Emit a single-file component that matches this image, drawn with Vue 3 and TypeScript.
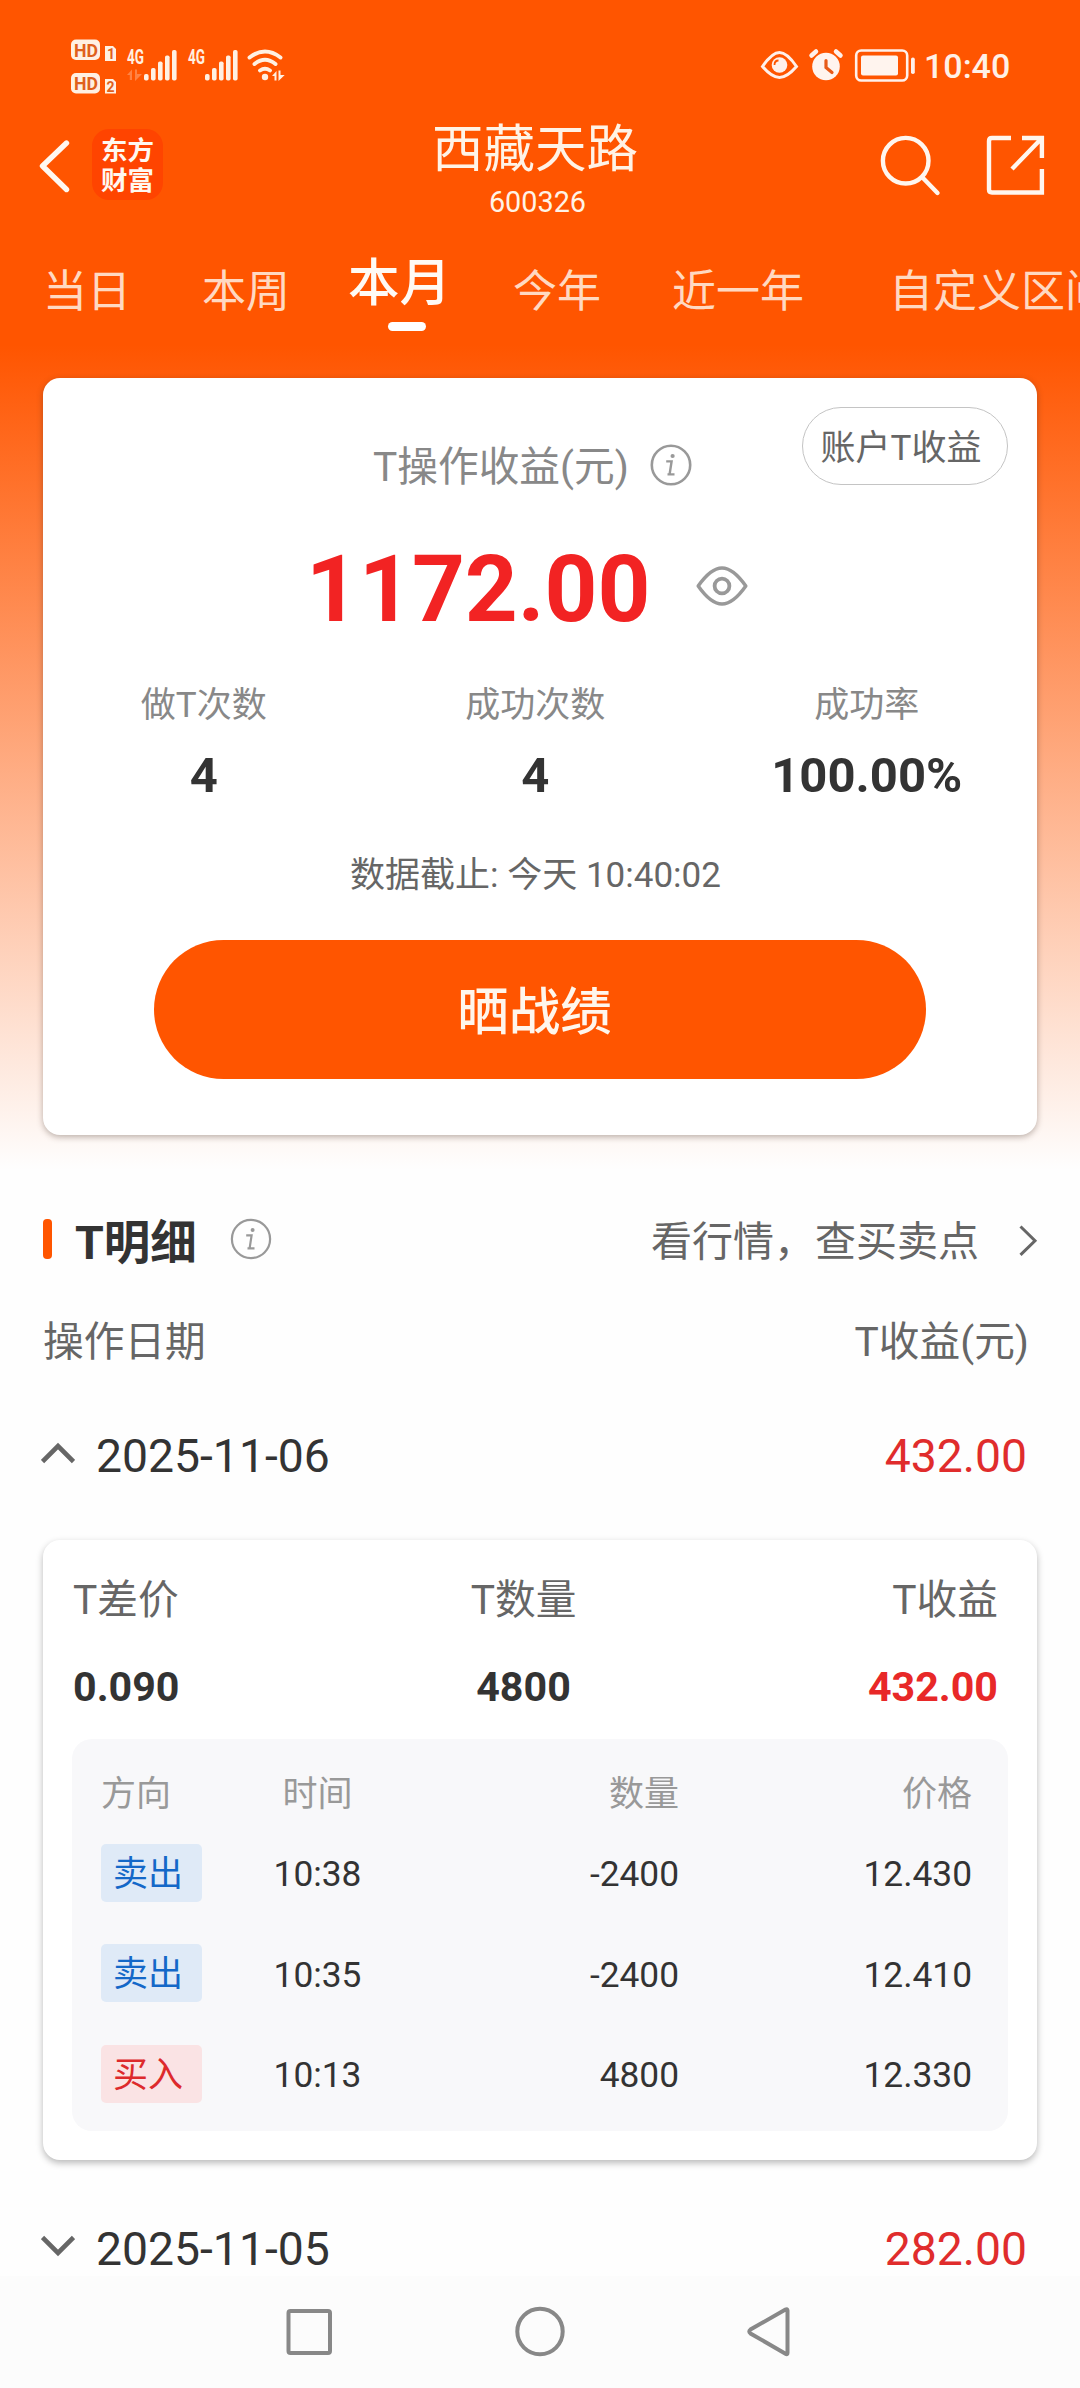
<script setup lang="ts">
interface Trade {
  side: 'sell' | 'buy'
  label: string
  time: string
  amount: string
  price: string
}

const tabs: { label: string; cls: string }[] = [
  { label: '当日', cls: 't1' },
  { label: '本周', cls: 't2' },
  { label: '本月', cls: 't3 active' },
  { label: '今年', cls: 't4' },
  { label: '近一年', cls: 't5' },
  { label: '自定义区间', cls: 't6' },
]

const stats = [
  { label: '做T次数', value: '4' },
  { label: '成功次数', value: '4' },
  { label: '成功率', value: '100.00%' },
]

const trades: Trade[] = [
  { side: 'sell', label: '卖出', time: '10:38', amount: '-2400', price: '12.430' },
  { side: 'sell', label: '卖出', time: '10:35', amount: '-2400', price: '12.410' },
  { side: 'buy', label: '买入', time: '10:13', amount: '4800', price: '12.330' },
]

const bars = [
  [144, 74],
  [151, 68],
  [158, 61.5],
  [165, 55.5],
  [172, 50],
]
</script>

<template>
  <div class="screen">
    <div class="hero">
      <div class="status">
        <svg width="300" height="104" viewBox="0 0 300 104">
          <g fill="#fff0e2">
            <rect x="71" y="39.5" width="29" height="20.5" rx="5" />
            <rect x="71" y="73" width="29" height="20.5" rx="5" />
            <path d="M105 46h8l3 3v12h-11z" />
            <path d="M105 79h8l3 3v11.5h-11z" />
            <g class="cond" font-size="19.500" font-weight="700">
              <text x="127" y="63.5" textLength="17" lengthAdjust="spacingAndGlyphs">4G</text>
              <text x="188" y="63.5" textLength="17" lengthAdjust="spacingAndGlyphs">4G</text>
            </g>
            <g v-for="b in bars" :key="b[0]">
              <rect :x="b[0]" :y="b[1]" width="4.6" :height="80.5 - b[1]" rx="1.8" />
              <rect :x="b[0] + 61" :y="b[1]" width="4.6" :height="80.5 - b[1]" rx="1.8" />
            </g>
            <circle cx="265" cy="77" r="3.2" />
            <path d="M272 76l4.500-5v9.500h-2V76zM278.500 70.500h2V75h4.200l-6.200 6z" />
            <path d="M127 75l5-5.500V80h-2.200v-5zM135 69.500h2V74h5l-7 7z" opacity="0.3" />
          </g>
          <g class="cond" fill="#e0601c" font-weight="700">
            <text x="74" y="56.500" font-size="18.500" textLength="24" lengthAdjust="spacingAndGlyphs">HD</text>
            <text x="74" y="90" font-size="18.500" textLength="24" lengthAdjust="spacingAndGlyphs">HD</text>
            <text x="107" y="58.500" font-size="14">1</text>
            <text x="106.500" y="91.500" font-size="14">2</text>
          </g>
          <g fill="none" stroke="#fff0e2" stroke-width="3.900" stroke-linecap="round">
            <path d="M249.500 57.500q15.500-12 31 0M254.500 64q10.500-8.500 21 0M260 70.500q5-3.500 10 0" />
          </g>
        </svg>
        <div class="status-right">
          <svg width="160" height="40" viewBox="758 45 160 40">
            <g fill="none" stroke="#fff0ea" stroke-width="3">
              <path d="M762.500 66.500C769 57 774 52.500 779.500 52.500S790 57 796.500 66.500C790 74 785 77.500 779.500 77.500S769 74 762.500 66.500z" />
              <rect x="856.200" y="50.500" width="51" height="30" rx="5" stroke-width="2.600" />
              <path d="M811.500 55.500l4.500-4M840.500 55.500l-4.500-4" stroke-width="4.500" stroke-linecap="round" />
            </g>
            <circle cx="779.500" cy="65" r="7.800" fill="#fff0ea" />
            <path d="M774.500 65q0-4.500 4-4.500" fill="none" stroke="#ff5500" stroke-width="1.800" />
            <circle cx="826" cy="66.500" r="13.800" fill="#fff4ee" />
            <path d="M826 60.500v7l6 5" fill="none" stroke="#e85a18" stroke-width="3.200" stroke-linecap="round" />
            <rect x="861" y="55.500" width="37" height="20" rx="2" fill="#fff4ee" />
            <rect x="911" y="57.500" width="3.800" height="16.500" rx="1.800" fill="#fff0ea" />
          </svg>
          <span class="clock">10:40</span>
        </div>
      </div>

      <header class="bar">
        <div class="bar-left">
          <svg class="back" width="32" height="56" viewBox="38 138 32 56">
            <path d="M66.500 143L42.500 166l24 23.500" fill="none" stroke="#fff8f0" stroke-width="5.400" stroke-linecap="round" stroke-linejoin="round" />
          </svg>
          <div class="logo"><span>东方</span><span>财富</span></div>
        </div>
        <div class="bar-title">
          <h1>西藏天路</h1>
          <p>600326</p>
        </div>
        <div class="bar-right">
          <svg width="170" height="66" viewBox="878 132 170 66" fill="none" stroke="#fff6ee" stroke-width="4.400">
            <circle cx="905.700" cy="160.700" r="22.800" />
            <path d="M922.500 177.500l15 15.500" stroke-linecap="round" />
            <path d="M1011 138H992q-3 0-3 3v48.500q0 3 3 3h49.900V169M1022 138h19.900v20M1041 139l-29 30" />
          </svg>
        </div>
      </header>

      <nav class="tabs">
        <span v-for="t in tabs" :key="t.label" :class="['tab', t.cls]">{{ t.label }}</span>
      </nav>

      <section class="card summary">
        <button class="pill">账户T收益</button>
        <div class="sum-title">
          <span>T操作收益(元)</span>
          <svg width="42" height="42" viewBox="-21 -21 42 42">
            <circle r="19.200" fill="none" stroke="#999" stroke-width="2.600" />
            <circle cx="1.600" cy="-9" r="2.100" fill="#999" />
            <path d="M-4.800-3.600H.6L-1.400 9.400H3.500M-3.500 9.400h3" fill="none" stroke="#999" stroke-width="2.400" />
          </svg>
        </div>
        <div class="sum-value">
          <span>1172.00</span>
          <svg width="52" height="42" viewBox="-26 -21 52 42" fill="none" stroke="#999" stroke-width="3.500">
            <path d="M-23.800 0C-15-12.500-8-18 0-18S15-12.500 23.800 0C15 12.500 8 18 0 18S-15 12.500-23.800 0z" stroke-linejoin="round" />
            <circle r="7.400" stroke-width="3.800" />
          </svg>
        </div>
        <div class="stats">
          <div v-for="s in stats" :key="s.label" class="stat">
            <span class="stat-label">{{ s.label }}</span>
            <strong>{{ s.value }}</strong>
          </div>
        </div>
        <p class="until">数据截止: 今天 10:40:02</p>
        <button class="share">晒战绩</button>
      </section>
    </div>

    <div class="section-head">
      <i class="mark"></i>
      <h2>T明细</h2>
      <svg class="info" width="42" height="42" viewBox="-21 -21 42 42">
        <circle r="19.100" fill="none" stroke="#999" stroke-width="2.200" />
        <circle cx="1.600" cy="-9" r="2" fill="#999" />
        <path d="M-4.800-3.600H.6L-1.400 9.400H3.500M-3.500 9.400h3" fill="none" stroke="#999" stroke-width="2.200" />
      </svg>
      <span class="link">看行情，查买卖点</span>
      <svg class="go" width="20" height="34" viewBox="1020 1222 20 34">
        <path d="M1022.500 1225.500l14.500 14.200-14.500 14.200" fill="none" stroke="#666" stroke-width="3" />
      </svg>
    </div>

    <div class="cols"><span>操作日期</span><span>T收益(元)</span></div>

    <div class="day first">
      <svg width="34" height="22" viewBox="0 0 34 22"><path d="M1.500 19.500L17 4l15.500 15.500" fill="none" stroke="#666" stroke-width="4.600" /></svg>
      <span>2025-11-06</span><b>432.00</b>
    </div>

    <section class="card detail">
      <div class="trio labels"><span>T差价</span><span>T数量</span><span>T收益</span></div>
      <div class="trio values"><span>0.090</span><span>4800</span><span class="red">432.00</span></div>
      <div class="table">
        <div class="tr th"><span>方向</span><span>时间</span><span>数量</span><span>价格</span></div>
        <div v-for="t in trades" :key="t.time" class="tr">
          <span :class="['badge', t.side]">{{ t.label }}</span>
          <span>{{ t.time }}</span><span>{{ t.amount }}</span><span>{{ t.price }}</span>
        </div>
      </div>
    </section>

    <div class="day second">
      <svg width="34" height="22" viewBox="0 0 34 22"><path d="M1.500 2.500L17 18 32.500 2.500" fill="none" stroke="#666" stroke-width="4.600" /></svg>
      <span>2025-11-05</span><b>282.00</b>
    </div>

    <footer class="sysnav">
      <svg width="1080" height="112" viewBox="0 2276 1080 112" fill="none" stroke="#888" stroke-width="4">
        <rect x="288.500" y="2311" width="41.500" height="42" rx="2" />
        <circle cx="540" cy="2331.500" r="22.700" />
        <path d="M787.500 2310.500v42.500q0 2-2 .7L750.500 2333.500q-2.500-2 0-4L785.500 2309.500q2-1 2 1z" />
      </svg>
    </footer>
  </div>
</template>

<style>
html,
body {
  margin: 0;
  background: #fff;
}
</style>

<style scoped>
.screen {
  width: 1080px;
  height: 2388px;
  overflow: hidden;
  display: flex;
  flex-direction: column;
  background: #fefefe;
  font-family: Roboto, 'Noto Sans CJK SC', sans-serif;
  color: #333;
}
.screen * {
  box-sizing: border-box;
}
h1,
h2,
p {
  margin: 0;
}
svg {
  display: block;
  flex: none;
}
button {
  font-family: inherit;
  padding: 0;
  border: 0;
}
.hero {
  height: 1180px;
  flex: none;
  background: linear-gradient(#ff5500 0, #ff5500 345px, #fefefe 1170px);
  overflow: hidden;
}
.status {
  height: 104px;
  display: flex;
  justify-content: space-between;
}
.cond {
  font-family: Roboto, sans-serif;
}
.status-right {
  display: flex;
  padding: 45px 72px 0 0;
}
.clock {
  width: 84px;
  margin-left: 6px;
  font-size: 34px;
  font-weight: 500;
  line-height: 42px;
  color: #fff0e6;
  white-space: nowrap;
}
.bar {
  height: 130px;
  display: grid;
  grid-template-columns: 300px 470px 310px;
}
.bar-left {
  display: flex;
  padding: 25px 0 0 38px;
}
.back {
  margin-top: 9px;
}
.logo {
  width: 71px;
  height: 71px;
  margin-left: 22px;
  padding-top: 7px;
  border-radius: 17px;
  background: #ff4400;
  color: #fff8f0;
  display: flex;
  flex-direction: column;
  align-items: center;
  font-size: 26.500px;
  font-weight: 700;
}
.logo span {
  line-height: 30px;
}
.bar-title {
  text-align: center;
  color: #fff3e6;
}
.bar-title h1 {
  font-size: 51.500px;
  font-weight: 400;
  line-height: 60px;
  margin-top: 16px;
}
.bar-title p {
  font-size: 28.800px;
  line-height: 36px;
  margin-top: 4px;
  padding-left: 5px;
}
.bar-right {
  display: flex;
  justify-content: flex-end;
  padding: 28px 32px 0 0;
}
.tabs {
  height: 144px;
  padding-top: 28px;
  display: flex;
  white-space: nowrap;
  overflow: hidden;
}
.tab {
  flex: none;
  font-size: 44px;
  line-height: 60px;
  color: #ffd9c2;
}
.t1 {
  margin-left: 43px;
}
.t2 {
  margin-left: 71px;
}
.t3 {
  margin-left: 58px;
}
.t4 {
  margin-left: 62px;
}
.t5 {
  margin-left: 71px;
}
.t6 {
  margin-left: 85px;
}
.tab.active {
  position: relative;
  height: 90px;
  margin-top: -8px;
  font-size: 51.500px;
  font-weight: 500;
  color: #fffaf4;
}
.tab.active::after {
  content: '';
  position: absolute;
  left: 40px;
  top: 68px;
  width: 38px;
  height: 9px;
  border-radius: 5px;
  background: #fff;
}
.card {
  flex: none;
  width: 994px;
  margin-left: 43px;
  border-radius: 17px;
  background: #fff;
}
.summary {
  position: relative;
  height: 757px;
  padding-top: 59px;
  box-shadow: 0 2px 6px rgba(60, 40, 30, 0.35);
}
.pill {
  position: absolute;
  right: 29px;
  top: 29px;
  width: 206px;
  height: 78px;
  border: 1.500px solid #c4c4c4;
  border-radius: 39px;
  background: #fff;
  color: #666;
  font-size: 35px;
  line-height: 50px;
  padding: 6px 8px 0 0;
}
.sum-title {
  display: flex;
  padding-left: 330px;
  gap: 21px;
  height: 60px;
  color: #888;
  font-size: 40.700px;
  line-height: 60px;
}
.sum-title svg {
  margin-top: 7px;
}
.sum-value {
  display: flex;
  align-items: center;
  height: 100px;
  margin-top: 43px;
  padding-left: 263px;
  gap: 45px;
  color: #f22323;
  font-size: 92.300px;
  font-weight: 700;
  line-height: 100px;
}
.sum-value svg {
  margin-top: -8px;
}
.stats {
  display: grid;
  grid-template-columns: repeat(3, 331.500px);
  margin: 41px 0 0 -5px;
}
.stat {
  display: flex;
  flex-direction: column;
  align-items: center;
}
.stat-label {
  font-size: 35px;
  line-height: 50px;
  color: #888;
}
.stat strong {
  margin-top: 15px;
  font-size: 49px;
  line-height: 60px;
  font-weight: 700;
}
.until {
  margin-top: 45px;
  padding-right: 9px;
  text-align: center;
  font-size: 35px;
  line-height: 50px;
  color: #666;
}
.share {
  display: block;
  width: 772px;
  height: 139px;
  margin: 39px 0 0 111px;
  padding: 6px 11px 0 0;
  border-radius: 70px;
  background: #ff5500;
  color: #fff6ec;
  font-size: 51.500px;
  font-weight: 500;
  line-height: 60px;
}
.section-head {
  flex: none;
  height: 122px;
  padding: 0 42px 0 43px;
  display: flex;
  align-items: center;
}
.mark {
  width: 9px;
  height: 40px;
  margin-top: -4px;
  border-radius: 4px;
  background: #ff5500;
}
h2 {
  margin: 3px 0 0 23px;
  font-size: 46.500px;
  font-weight: 700;
  line-height: 60px;
}
.info {
  margin: -4px 0 0 33px;
}
.link {
  margin: 2px 39px 0 auto;
  font-size: 41px;
  line-height: 60px;
  color: #666;
}
.go {
  margin-top: -3px;
}
.cols {
  flex: none;
  display: flex;
  justify-content: space-between;
  margin-top: 10px;
  padding: 0 51px 0 43px;
  font-size: 40.700px;
  line-height: 60px;
  color: #666;
}
.day {
  flex: none;
  display: flex;
  align-items: center;
  height: 60px;
  padding: 0 53px 0 41px;
  font-size: 46.300px;
  line-height: 60px;
}
.day span {
  margin-left: 21px;
}
.day b {
  margin-left: auto;
  font-weight: 400;
  color: #e02c2c;
}
.day svg {
  margin-top: -6px;
}
.first {
  margin-top: 54px;
}
.second {
  margin-top: 59px;
  margin-bottom: -3px;
}
.detail {
  height: 620px;
  margin-top: 54px;
  padding: 30px 29px 0;
  box-shadow: 0 3px 7px rgba(0, 0, 0, 0.28);
}
.trio {
  display: grid;
  grid-template-columns: 300px 301px 324px;
  padding-left: 1px;
  line-height: 60px;
}
.trio span:nth-child(2) {
  text-align: center;
}
.trio span:nth-child(3) {
  text-align: right;
}
.labels {
  font-size: 40.700px;
  color: #666;
}
.values {
  margin-top: 27px;
  font-size: 41.200px;
  font-weight: 700;
}
.red {
  color: #e82828;
}
.table {
  height: 392px;
  margin-top: 22px;
  padding: 31px 29px 0;
  border-radius: 20px;
  background: #f8f8fa;
}
.tr {
  display: grid;
  grid-template-columns: 101px 231px 246px 293px;
  height: 100.500px;
  align-items: center;
  font-size: 35.300px;
  line-height: 50px;
  text-align: right;
}
.tr span:first-child {
  text-align: left;
}
.tr span:nth-child(2) {
  text-align: center;
}
.th {
  height: 50px;
  margin-bottom: 4px;
  color: #999;
  font-size: 35px;
}
.badge {
  height: 58px;
  padding-left: 12px;
  border-radius: 5px;
  font-size: 35px;
  line-height: 61px;
  margin-top: -3px;
}
.sell {
  background: #dfeaf7;
  color: #1468c8;
}
.buy {
  background: #fae3e4;
  color: #dd2a2c;
}
.sysnav {
  flex: none;
  margin-top: auto;
  height: 112px;
  position: relative;
  background: #fcfcfc;
}
</style>
